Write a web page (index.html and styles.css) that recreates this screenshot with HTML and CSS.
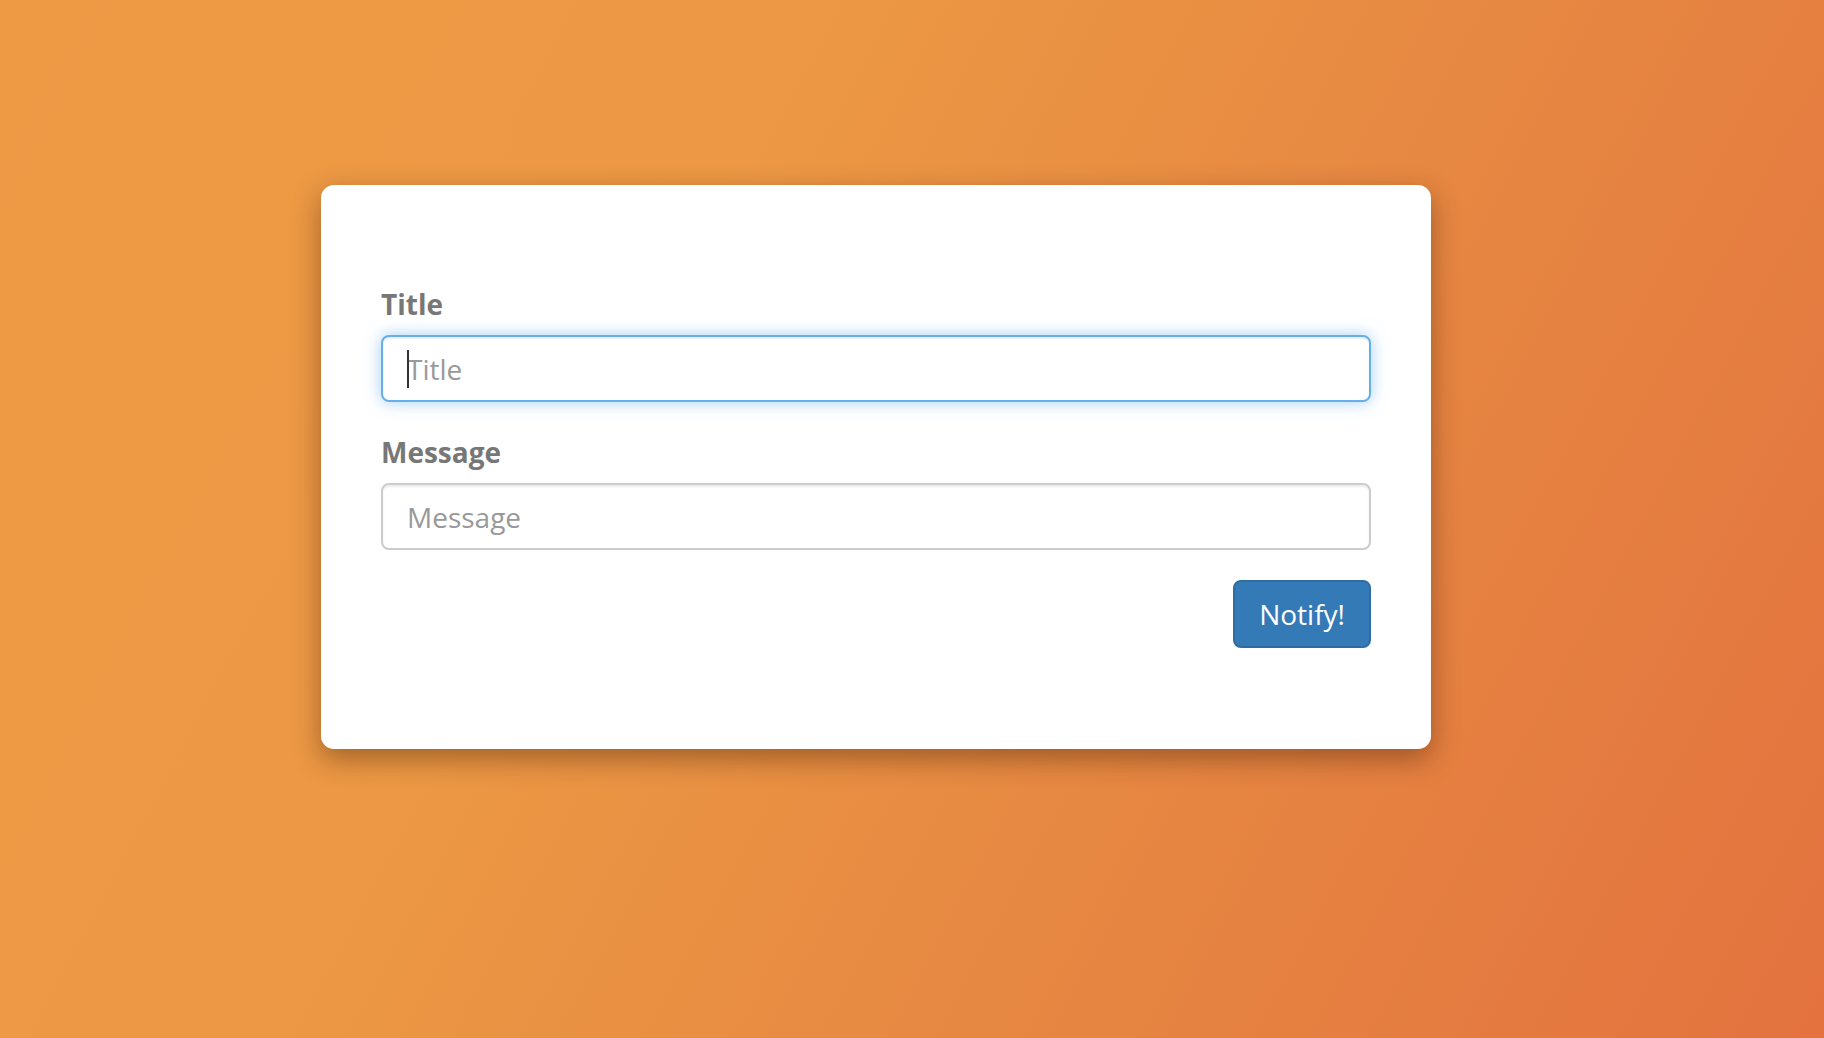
FILE: index.html
```html
<!DOCTYPE html>
<html lang="en">
<head>
<meta charset="utf-8">
<title>Notify</title>
<link rel="stylesheet" href="styles.css">
</head>
<body>
<main class="page">
  <section class="card">
    <form class="form">
      <div class="form-group">
        <label class="label" for="title">Title</label>
        <div class="field">
          <input class="input input-focus" id="title" type="text" placeholder="Title">
          <span class="caret"></span>
        </div>
      </div>
      <div class="form-group">
        <label class="label" for="message">Message</label>
        <input class="input" id="message" type="text" placeholder="Message">
      </div>
      <div class="actions">
        <button class="btn" type="button">Notify!</button>
      </div>
    </form>
  </section>
</main>
</body>
</html>
```
FILE: styles.css
```css
html, body {
  margin: 0;
  padding: 0;
  height: 100%;
}
body {
  font-family: "Open Sans", "Noto Sans", sans-serif;
  background: linear-gradient(118deg, #ee9a45 0%, #ec9844 35%, #e78a42 60%, #e3723f 100%);
  min-height: 1038px;
}
.page {
  padding: 185px 0 0 321px;
}
.card {
  width: 1110px;
  box-sizing: border-box;
  background: #fff;
  border-radius: 13px;
  box-shadow: 0 10px 28px rgba(60, 25, 0, 0.42);
  padding: 99px 60px 101px 60px;
}
.form-group {
  margin-bottom: 30px;
}
.label {
  display: block;
  font-size: 28px;
  line-height: 40px;
  font-weight: 700;
  color: #777;
  margin-bottom: 11px;
}
.field {
  position: relative;
}
.input {
  display: block;
  width: 100%;
  height: 67px;
  box-sizing: border-box;
  border: 2px solid #ccc;
  border-radius: 8px;
  padding: 0 24px;
  font-family: "Open Sans", "Noto Sans", sans-serif;
  font-size: 28px;
  color: #555;
  background: #fff;
  box-shadow: inset 0 2px 2px rgba(0, 0, 0, 0.075);
  outline: none;
}
.input::placeholder {
  color: #999;
}
.input-focus {
  border-color: #66afe9;
  box-shadow: inset 0 2px 2px rgba(0, 0, 0, 0.075), 0 0 16px rgba(102, 175, 233, 0.6);
}
.caret {
  position: absolute;
  left: 26px;
  top: 15px;
  width: 2px;
  height: 38px;
  background: #333;
}
.actions {
  display: flex;
  justify-content: flex-end;
}
.btn {
  height: 68px;
  box-sizing: border-box;
  padding: 0 24px;
  font-family: "Open Sans", "Noto Sans", sans-serif;
  font-size: 28px;
  color: #fff;
  background: #337ab7;
  border: 2px solid #2e6da4;
  border-radius: 8px;
  cursor: pointer;
}
```
